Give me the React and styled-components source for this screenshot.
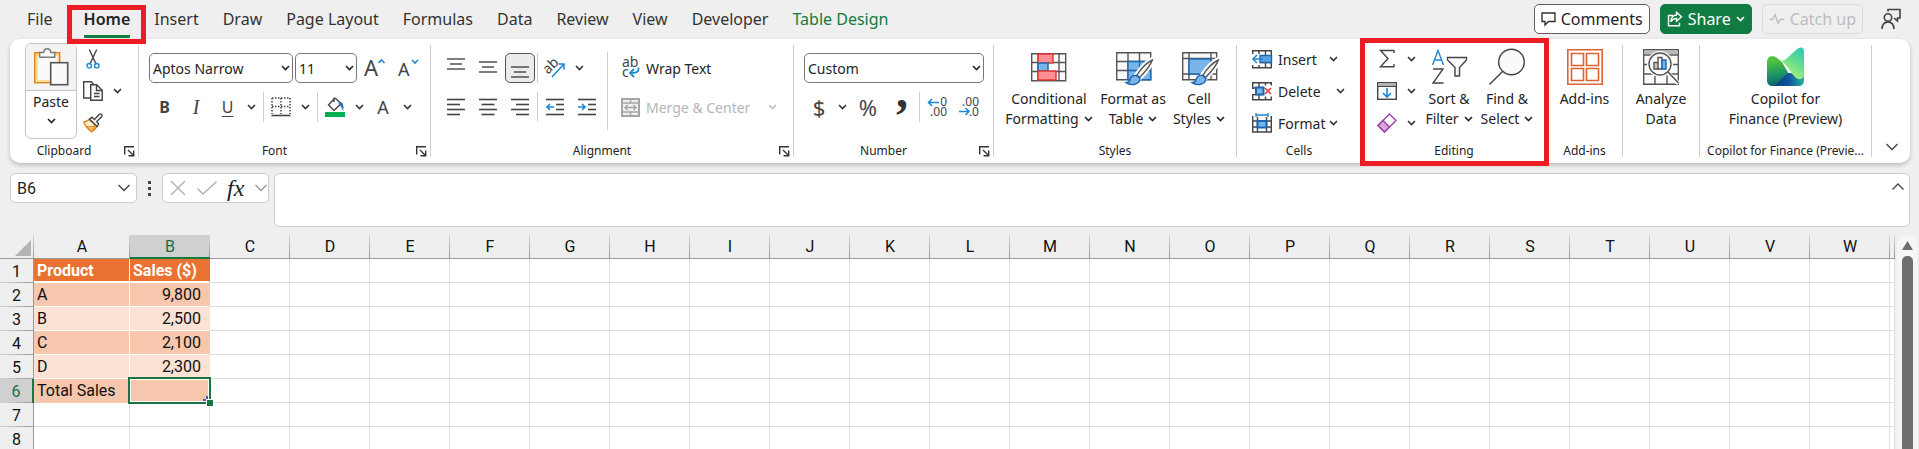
import React from 'react';
import styled, { createGlobalStyle, css } from 'styled-components';

const UI_FONT = '"Noto Sans", "Open Sans", sans-serif';
const CELL_FONT = 'Roboto, "Liberation Sans", sans-serif';
const GREEN = '#107c41';
const BLUE = '#1e88d2';
const INK = '#444444';

const GlobalStyle = createGlobalStyle`
  * {
    box-sizing: border-box;
  }
  body {
    margin: 0;
    background: #efefef;
    color: #242424;
    font-family: ${UI_FONT};
    font-size: 14px;
  }
  button, input, select, textarea {
    margin: 0;
    padding: 0;
    border: 0;
    background: none;
    color: inherit;
    font: inherit;
    outline: none;
  }
  svg {
    display: block;
    flex: none;
    overflow: visible;
  }
`;

const Window = styled.div`
  display: flex;
  flex-direction: column;
  height: 100vh;
  overflow: hidden;
`;

/* ---------- tabs ---------- */

const TabBar = styled.header`
  display: flex;
  align-items: center;
  height: 39px;
  padding: 0 12px 0 15px;
`;

const Tabs = styled.nav`
  display: flex;
  height: 100%;
  flex: 1;
`;

const highlight = css`
  &::after {
    content: '';
    position: absolute;
    border: 5px solid #ed1c24;
    pointer-events: none;
    z-index: 2;
  }
`;

const Tab = styled.button`
  position: relative;
  padding: 0 12px;
  font-size: 16px;
  line-height: 32px;
  white-space: nowrap;
  color: ${({ $accent }) => ($accent ? GREEN : '#333333')};
  &:first-child {
    margin-right: 7px;
  }
  ${({ $active }) => $active && css`
    font-weight: 600;
    color: #242424;
    ${highlight}
    &::after {
      inset: 5px -4px -5px -5px;
    }
  `}
`;

const TabText = styled.span`
  display: block;
  padding-top: 2px;
  border-bottom: 3px solid ${({ $active }) => ($active ? GREEN : 'transparent')};
  border-radius: 1px;
`;

const Actions = styled.div`
  display: flex;
  align-items: center;
  gap: 10px;
  padding-bottom: 1px;
`;

const actionKinds = {
  outline: css`
    background: #ffffff;
    border: 1px solid #616161;
  `,
  primary: css`
    background: ${GREEN};
    border: 1px solid ${GREEN};
    color: #ffffff;
  `,
  disabled: css`
    border: 1px solid #dcdcdc;
    color: #bdbdbd;
  `,
};

const Action = styled.button`
  display: flex;
  align-items: center;
  gap: 5px;
  height: 30px;
  padding: 0 6px;
  border-radius: 5px;
  font-size: 16px;
  white-space: nowrap;
  ${({ $kind }) => actionKinds[$kind]}
`;

const PersonButton = styled.button`
  width: 32px;
  height: 30px;
  display: flex;
  align-items: center;
  justify-content: center;
  margin-left: 2px;
`;

/* ---------- ribbon ---------- */

const RibbonBar = styled.section`
  display: flex;
  margin: 0 9px 0 10px;
  background: #ffffff;
  border-radius: 10px;
  box-shadow: 0 2px 4px rgba(0, 0, 0, 0.22);
`;

const Divider = styled.span`
  flex: none;
  width: 1px;
  margin: 6px 0;
  background: #cfcfcf;
`;

const GroupBox = styled.section`
  display: flex;
  flex-direction: column;
  flex: none;
  width: ${({ $width }) => $width}px;
  padding: 4px 0 2px;
  ${({ $highlighted }) => $highlighted && css`
    position: relative;
    ${highlight}
    &::after {
      inset: -1px -3px -3px -2px;
    }
  `}
`;

const GroupBody = styled.div`
  display: flex;
  height: 98px;
  padding-left: ${({ $inset }) => $inset || 0}px;
  justify-content: ${({ $center }) => ($center ? 'center' : 'flex-start')};
`;

const GroupFooter = styled.div`
  display: flex;
  align-items: center;
  height: 20px;
`;

const Caption = styled.span`
  flex: 1;
  min-width: 0;
  padding: 0 4px;
  overflow: hidden;
  text-overflow: ellipsis;
  white-space: nowrap;
  text-align: center;
  font-size: 12px;
  line-height: 20px;
`;

const Launcher = styled.button`
  display: flex;
  width: 20px;
  height: 20px;
  align-items: center;
  padding-left: 6px;
`;

const Rows = styled.div`
  display: flex;
  flex-direction: column;
  gap: 9px;
  padding-top: 10px;
`;

const Stack = styled.div`
  display: flex;
  flex-direction: column;
`;

const Row = styled.div`
  display: flex;
  align-items: center;
  height: ${({ $tall }) => ($tall ? 32 : 30)}px;
  gap: ${({ $gap }) => $gap || 0}px;
`;

const Rule = styled.span`
  width: 1px;
  height: 30px;
  margin: 0 1px 0 ${({ $space }) => $space || 1}px;
  background: #cfcfcf;
`;

const LongRule = styled(Rule)`
  height: 78px;
  margin: 9px 10px 0 4px;
`;

const IconButton = styled.button`
  display: flex;
  align-items: center;
  justify-content: center;
  flex: none;
  width: ${({ $width }) => $width || 32}px;
  height: 30px;
  border-radius: 5px;
  color: ${INK};
  font-size: 20px;
  ${({ $pressed }) => $pressed && css`
    width: 30px;
    margin: 0 1px;
    background: #ebebeb;
    border: 1px solid #555555;
  `}
`;

const ArrowButton = styled.button`
  display: flex;
  align-items: center;
  justify-content: center;
  flex: none;
  width: 16px;
  height: 30px;
  color: ${({ disabled }) => (disabled ? '#bdbdbd' : '#333333')};
`;

const Letter = styled.span`
  font-size: ${({ $size }) => $size || 16}px;
  line-height: 24px;
  ${({ $face }) => $face === 'bold' && 'font-weight: 700;'}
  ${({ $face }) => $face === 'italic' && 'font-style: italic; font-family: "Liberation Serif", serif;'}
  ${({ $face }) => $face === 'underline' && 'text-decoration: underline; text-underline-offset: 3px;'}
`;

const LabelButton = styled.button`
  display: flex;
  align-items: center;
  gap: 6px;
  height: 30px;
  padding: 0 ${({ $after }) => $after || 0}px 0 3px;
  white-space: nowrap;
  color: ${({ disabled }) => (disabled ? '#b5b5b5' : 'inherit')};
`;

const BigButton = styled.button`
  display: flex;
  flex-direction: column;
  align-items: center;
  flex: none;
  width: ${({ $width }) => ($width ? `${$width}px` : 'auto')};
  padding-top: 4px;
  line-height: 20px;
  white-space: nowrap;
`;

const BigIcon = styled.span`
  display: flex;
  align-items: center;
  height: 40px;
  margin-bottom: 2px;
`;

const BigLine = styled.span`
  display: flex;
  align-items: center;
  gap: 5px;
`;

const PasteBox = styled.div`
  display: flex;
  flex-direction: column;
  width: 52px;
  height: 96px;
  border: 1px solid #c4c4c4;
  border-radius: 6px;
  overflow: hidden;
`;

const PasteTop = styled.button`
  display: flex;
  align-items: center;
  justify-content: center;
  height: 47px;
  background: #f3f3f3;
  border-bottom: 1px solid #c4c4c4;
`;

const PasteBottom = styled.button`
  display: flex;
  flex-direction: column;
  align-items: center;
  gap: 5px;
  line-height: 22px;
`;

const SelectBox = styled.div`
  display: grid;
  align-items: center;
  width: ${({ $width }) => $width}px;
  height: 30px;
  border: 1px solid #767676;
  border-radius: 5px;
  background: #ffffff;
  & > * {
    grid-area: 1 / 1;
  }
  & > svg {
    justify-self: end;
    margin-right: 2px;
    pointer-events: none;
  }
`;

const Select = styled.select`
  appearance: none;
  width: 100%;
  height: 28px;
  padding-left: 3px;
`;

const CollapseButton = styled.button`
  display: flex;
  align-items: flex-end;
  margin-left: auto;
  padding: 0 12px 12px;
`;

/* ---------- formula bar ---------- */

const FormulaRow = styled.section`
  display: flex;
  align-items: flex-start;
  margin: 10px 9px 8px 10px;
`;

const fieldBox = css`
  display: flex;
  align-items: center;
  border: 1px solid #cccccc;
  border-radius: 5px;
  background: #ffffff;
`;

const NameBox = styled.div`
  ${fieldBox}
  width: 127px;
  height: 30px;
  padding-right: 6px;
`;

const NameInput = styled.input`
  flex: 1;
  min-width: 0;
  padding-left: 6px;
  font-family: ${CELL_FONT};
  font-size: 16px;
`;

const Dots = styled.span`
  display: flex;
  flex-direction: column;
  justify-content: center;
  gap: 3px;
  height: 30px;
  margin: 0 11px;
  i {
    width: 3px;
    height: 3px;
    background: #444444;
  }
`;

const FxBox = styled.div`
  ${fieldBox}
  justify-content: space-between;
  width: 107px;
  height: 30px;
  padding: 0 1px 0 7px;
  margin-right: 5px;
`;

const FxLetter = styled.span`
  font: italic 400 24px/26px "Liberation Serif", serif;
  color: #222222;
`;

const FormulaBox = styled.div`
  ${fieldBox}
  flex: 1;
  align-items: flex-start;
  height: 54px;
`;

const FormulaInput = styled.textarea`
  flex: 1;
  height: 50px;
  padding: 4px 8px;
  resize: none;
`;

const ExpandButton = styled.button`
  padding: 9px 5px;
`;

/* ---------- sheet ---------- */

const SheetArea = styled.main`
  display: flex;
  flex: 1;
  min-height: 0;
  font-family: ${CELL_FONT};
  font-size: 16px;
`;

const SheetClip = styled.div`
  flex: 1;
  min-width: 0;
  overflow: hidden;
`;

const Sheet = styled.table`
  width: 100%;
  table-layout: fixed;
  border-collapse: separate;
  border-spacing: 0;
  background: #ffffff;
`;

const Col = styled.col`
  width: ${({ $width }) => $width}px;
`;

const ColumnHead = styled.th`
  height: 24px;
  padding: 0;
  font-weight: 400;
  color: ${({ $active }) => ($active ? '#1e6b47' : '#111111')};
  background:
    linear-gradient(#d8d8d8, #9a9a9a) right / 1px 100% no-repeat,
    ${({ $active }) => ($active ? '#d0d0d0' : '#efefef')};
  border-bottom: ${({ $active }) => ($active ? `2px solid ${GREEN}` : '1px solid #9a9a9a')};
`;

const Corner = styled(ColumnHead)`
  svg {
    margin: 3px 3px 0 auto;
  }
`;

const RowHead = styled.th`
  height: 24px;
  padding: 0;
  font-weight: 400;
  color: ${({ $active }) => ($active ? '#1e6b47' : '#111111')};
  background:
    linear-gradient(to right, #d8d8d8, #9a9a9a) bottom / 100% 1px no-repeat,
    ${({ $active }) => ($active ? '#d0d0d0' : '#efefef')};
  border-right: ${({ $active }) => ($active ? `2px solid ${GREEN}` : '1px solid #9a9a9a')};
`;

const Cell = styled.td`
  height: 24px;
  padding: 0 3px;
  line-height: 20px;
  white-space: nowrap;
  color: #111111;
  border: solid #dedede;
  border-width: 0 1px 1px 0;
`;

const bands = { head: '#e97132', dark: '#f6c6ad', light: '#fbe2d5' };

const TableCell = styled(Cell)`
  background: ${({ $band }) => bands[$band]};
  border-bottom-color: ${({ $last }) => ($last ? 'transparent' : '#ffffff')};
  border-right-color: ${({ $numeric }) => ($numeric ? 'transparent' : '#ffffff')};
  ${({ $numeric, $band }) => $numeric && $band !== 'head' && 'text-align: right; padding-right: 8px;'}
  ${({ $band }) => $band === 'head' && css`
    padding-top: 2px;
    color: #ffffff;
    font-weight: 700;
    border-bottom-width: 2px;
  `}
`;

const SelectedCell = styled(TableCell)`
  position: relative;
`;

const SelectionFrame = styled.span`
  position: absolute;
  inset: -2px;
  border: 2px solid #1a7343;
  box-shadow: inset 0 0 0 1px #ffffff;
  &::before {
    content: '';
    position: absolute;
    right: -4px;
    bottom: -4px;
    width: 6px;
    height: 6px;
    background: #1a7343;
    border: solid #ffffff;
    border-width: 1px 0 0 1px;
  }
  &::after {
    content: '';
    position: absolute;
    right: 1px;
    bottom: 1px;
    width: 5px;
    height: 5px;
    background:
      linear-gradient(#4059a8, #4059a8) right top / 2px 3px no-repeat,
      linear-gradient(#4059a8, #4059a8) left bottom / 3px 2px no-repeat;
  }
`;

const ScrollTrack = styled.div`
  display: flex;
  flex-direction: column;
  align-items: center;
  gap: 6px;
  flex: none;
  width: 20px;
  margin: 0 2px;
  padding-top: 6px;
  background: #f6f6f6;
  border-radius: 10px 10px 0 0;
`;

const ScrollThumb = styled.div`
  flex: 1;
  width: 11px;
  background: #6f6f6f;
  border-radius: 5px 5px 0 0;
`;

/* ---------- icons ---------- */

const Svg = ({ w, h, children, ...rest }) => (
  <svg width={w} height={h} viewBox={`0 0 ${w} ${h}`} fill="none" stroke={INK} strokeWidth="1.4" aria-hidden="true" {...rest}>
    {children}
  </svg>
);

const Chevron = () => (
  <Svg w={9} h={6} stroke="currentColor" strokeWidth="1.6"><path d="M1 1l3.5 3.5L8 1" /></Svg>
);

const WideChevron = ({ up, color = '#444444' }) => (
  <Svg w={12} h={8} stroke={color}><path d={up ? 'M.5 6.5L6 1l5.5 5.5' : 'M.5 1L6 6.5 11.5 1'} /></Svg>
);

const LauncherIcon = () => (
  <Svg w={11} h={11} stroke="#333333"><path d="M.7 8.500V.7h9.300M4 4l5.500 5.500M9.700 4.500v5.200H4.500" /></Svg>
);

const PasteIcon = () => (
  <Svg w={36} h={40}>
    <rect x="3.500" y="7.500" width="22" height="27" fill="#fafafa" stroke="#fbdc9a" strokeWidth="3" />
    <rect x="1.700" y="5.700" width="25" height="30" stroke="#e3801c" />
    <path d="M6.700 10.300V5.500h4c.5-5 6.600-5 7.100 0h4v4.800z" fill="#fafafa" stroke="#7a7a7a" />
    <rect x="17.700" y="15.700" width="17" height="22" fill="#fafafa" stroke="#555555" strokeWidth="1.600" />
  </Svg>
);

const CutIcon = () => (
  <Svg w={14} h={20}>
    <path d="M3.300 .5L9.800 14.500M10.700 .5L4.200 14.500" />
    <circle cx="3.200" cy="16.700" r="2.200" stroke={BLUE} />
    <circle cx="10.800" cy="16.700" r="2.200" stroke={BLUE} />
  </Svg>
);

const CopyIcon = () => (
  <Svg w={20} h={20}>
    <path d="M7 17H.7V.7h7.500l2.500 2.500" />
    <path d="M7.700 3.700h6l5.500 5.500v10H7.700z" fill="#fafafa" />
    <path d="M13.500 4v5.500H19M11 12.500h5.500M11 15.500h5.500" />
  </Svg>
);

const BrushIcon = () => (
  <Svg w={20} h={20}>
    <path d="M6 6.500C4.500 8 2.800 8.800.8 9.200c1.700 4 4.200 7 8 9.600 2-1.500 3.800-3.300 5.200-5.300z" fill="#fdf0d8" stroke="#e3801c" />
    <path d="M3 13c3 1 6 1 9.500-.5l-3.700 6z" fill="#f9c56b" stroke="#e3801c" strokeWidth="1" />
    <path d="M6.500 6L9 4.200l2.500 2.300 4.800-5.200c1.500-1.200 3.700.8 2.400 2.400l-5 4.800 2 2.500-1.700 2.500z" fill="#fafafa" />
  </Svg>
);

const LetterIcon = ({ size, up }) => (
  <Svg w={22} h={22}>
    <text x="0" y="19" fontSize={size} fill={INK} stroke="none">A</text>
    <path d={up ? 'M14.500 6l3-3 3 3' : 'M14 3l3 3 3-3'} stroke={BLUE} strokeWidth="1.600" />
  </Svg>
);

const BordersIcon = () => (
  <Svg w={20} h={20}>
    <path d="M1 1h18M1 1v16M19 1v16M10 1v16M1 9.500h18" strokeDasharray="1.500 1.500" strokeWidth="1.500" />
    <path d="M.5 18.500h19" strokeWidth="1.600" />
  </Svg>
);

const FillIcon = () => (
  <Svg w={20} h={22}>
    <path d="M9.500 2.500L3.500 9l5.500 5.500 7-7L10 2M9 6V1.500" />
    <path d="M14.500 7c2.500-1 3.500 2 3.200 5.500-1.200-2.500-1.700-3.500-3.200-5.500z" fill="#2b6fb3" stroke="#2b6fb3" />
    <rect y="16" width="20" height="5" fill="#00b050" stroke="none" />
  </Svg>
);

const lines = (rows) => rows.map(([x, y, w]) => <path key={y} d={`M${x} ${y}h${w}`} />);

const VAlignIcon = ({ y }) => (
  <Svg w={18} h={24}>{lines([[0, y, 18], [3, y + 5, 12], [0, y + 10, 18]])}</Svg>
);

const HALIGN = { left: 0, center: 1, right: 2 };
const HAlignIcon = ({ align }) => {
  const k = HALIGN[align];
  return (
    <Svg w={18} h={18} strokeWidth="1.600">
      {lines([[0, 1.5, 18], [k * 2.5, 6.5, 13], [0, 11.5, 18], [k * 2.5, 16.5, 13]])}
    </Svg>
  );
};

const IndentIcon = ({ out }) => (
  <Svg w={18} h={18} strokeWidth="1.600">
    {lines([[0, 1.5, 18], [10, 6.5, 8], [10, 11.5, 8], [0, 16.5, 18]])}
    <path d={out ? 'M8 9H1M4 6L1 9l3 3' : 'M0 9h7M4 6l3 3-3 3'} stroke={BLUE} />
  </Svg>
);

const OrientationIcon = () => (
  <Svg w={22} h={22}>
    <text x="-1" y="14" fontSize="14" fill={INK} stroke="none" transform="rotate(-45 6 10)">ab</text>
    <path d="M8 20L20 7M14.500 7H20v5.500" stroke={BLUE} strokeWidth="1.600" />
  </Svg>
);

const WrapIcon = () => (
  <Svg w={19} h={22}>
    <text x="1" y="10" fontSize="14" fill={INK} stroke="none">ab</text>
    <text x="1" y="20" fontSize="14" fill={INK} stroke="none">c</text>
    <path d="M17.500 10.500c.5 4-1 5.500-8 5.500M13 12l-4 4 4 4" stroke={BLUE} strokeWidth="1.800" />
  </Svg>
);

const MergeIcon = () => (
  <Svg w={19} h={19} stroke="#a6a6a6">
    <rect x="1" y="1" width="17" height="17" fill="#f0f0f0" strokeWidth="2" />
    <path d="M1 5h17M1 14h17M9.500 1v4M9.500 14v4M4 9.500h11M6.500 7L4 9.500 6.500 12M12.500 7L15 9.500 12.500 12" />
  </Svg>
);

const CommaIcon = () => (
  <Svg w={12} h={18}>
    <text x="0" y="9" fontSize="48" fontWeight="700" fontFamily="Liberation Serif, serif" fill="#333333" stroke="none">,</text>
  </Svg>
);

const DecimalIcon = ({ more }) => (
  <Svg w={20} h={20}>
    <g fontSize="12" fill={INK} stroke="none" textAnchor="end">
      <text x="20" y="9">{more ? '0' : '.00'}</text>
      <text x="20" y="19">{more ? '.00' : '.0'}</text>
    </g>
    <path d={more ? 'M12 5.500H1.500M5 2L1.500 5.500 5 9' : 'M0 14.500h10M6.500 11l3.500 3.500L6.500 18'} stroke={BLUE} strokeWidth="1.600" />
  </Svg>
);

const ConditionalIcon = () => (
  <Svg w={36} h={30} stroke="#555555">
    <path d="M.7 1.700h34v27H.7zM.7 10.500h34M.7 19.500h34M7 1v27M28 1v27" fill="#fafafa" />
    <rect x="7" y="2" width="15" height="9" fill="#ff8f93" stroke="#e0332f" />
    <rect x="7" y="11" width="10" height="8" fill="#7ab5ea" stroke="#1b66b0" />
    <rect x="7" y="19" width="18" height="9" fill="#ff8f93" stroke="#e0332f" />
  </Svg>
);

const Paintbrush = () => (
  <g>
    <path d="M37 8c-6 3-12 10-16 16l4 3C31 21 36 15 38 9z" fill="#ffffff" stroke="#ffffff" strokeWidth="4" />
    <path d="M37.300 9c-6 3-11.500 9-15.300 15l2.500 2.500C30 21 35.500 15 37.300 9z" fill="#fafafa" stroke="#555555" />
    <path d="M21.500 24.500c-4-.5-6 1.500-6.500 4.500-.5 2-2 2.500-4 2.700 5 3.300 13.500 2.300 14-4.200z" fill="#7ab5ea" stroke="#1b66b0" />
  </g>
);

const FormatTableIcon = () => (
  <Svg w={36} h={32} stroke="#555555">
    <path d="M1.700 1.700h34v27h-34zM1.700 10.500h34M1.700 19.500h34M13 1v27M24.500 1v27" fill="#fafafa" />
    <path d="M13 10.500h22.700v18.200H13z" fill="#7ab5ea" stroke="#1b66b0" />
    <path d="M13 19.500h22M24.500 10.500v18" stroke="#1b66b0" />
    <Paintbrush />
  </Svg>
);

const CellStylesIcon = () => (
  <Svg w={36} h={32} stroke="#555555">
    <path d="M1.700 1.700h34v27h-34zM1.700 7.500h34M1.700 23h34M8 1v27M30 1v27" fill="#fafafa" />
    <rect x="8" y="8" width="22" height="15" fill="#7ab5ea" stroke="#1b66b0" />
    <Paintbrush />
  </Svg>
);

const CELL_GRID = 'M.7.700h18.600v17H.7zM.7 6h18.600M.7 12.500h18.600M7 .7v17M13.500 .7v17';

const InsertIcon = () => (
  <Svg w={20} h={19}>
    <path d={CELL_GRID} fill="#fafafa" />
    <path d="M0 4h8v11H0z" fill="#ffffff" stroke="none" />
    <rect x="8" y="5.500" width="11.500" height="7" fill="#5da3e0" stroke="#1b66b0" />
    <path d="M11 9H1M5 5L1 9l4 4" stroke={BLUE} strokeWidth="1.600" />
  </Svg>
);

const DeleteIcon = () => (
  <Svg w={20} h={19}>
    <path d={CELL_GRID} fill="#fafafa" />
    <path d="M11 3.500h9v11h-9zM0 7h3v5H0z" fill="#ffffff" stroke="none" />
    <rect x="4" y="5.500" width="7.500" height="7" fill="#7ab5ea" stroke="#1b66b0" strokeWidth="2" />
    <path d="M13 6l6 6M19 6l-6 6" stroke="#e53935" strokeWidth="1.600" />
  </Svg>
);

const FormatIcon = () => (
  <Svg w={20} h={20}>
    <path d="M.7 3v16h18.600V3M.7 8h18.600M.7 14h18.600M5.500 4v15M14.500 4v15" />
    <rect x="5.500" y="8" width="9" height="6.500" fill="#7ab5ea" stroke="#1b66b0" strokeWidth="2" />
    <path d="M4 2h12M4 0v4M16 0v4" stroke={BLUE} />
  </Svg>
);

const SumIcon = () => (
  <Svg w={16} h={20}><path d="M15 4V1.500H1.500L9 9.500l-7.500 8.200H15V15" /></Svg>
);

const FillDownIcon = () => (
  <Svg w={20} h={18}>
    <rect x=".7" y=".7" width="18.600" height="16.600" fill="#fafafa" />
    <path d="M.7 4.300h18.600" />
    <path d="M1 1.500h18v2H1z" fill="#b5b5b5" stroke="none" />
    <path d="M10 6v9M6 11l4 4 4-4" stroke={BLUE} strokeWidth="1.600" />
  </Svg>
);

const EraserIcon = () => (
  <Svg w={20} h={20} stroke="#9b3fa5">
    <path d="M12.500 1L19 7.500 7.500 19 1 12.500z" fill="#ffffff" />
    <path d="M6 7.500l6.500 6.500-5 5L1 12.500z" fill="#d9a3de" />
  </Svg>
);

const SortIcon = () => (
  <Svg w={36} h={38}>
    <path d="M1.500 17L7 2.500 12.500 17M3.500 12h7" stroke={BLUE} />
    <path d="M2 21h10L2 35h10.500" />
    <path d="M16.500 9.500h19v2.500l-7 7.500v8.500h-4.500v-8.500l-7.500-7.500z" fill="#fafafa" />
  </Svg>
);

const FindIcon = () => (
  <Svg w={38} h={38}>
    <circle cx="23.500" cy="14" r="12.800" fill="#fafafa" />
    <path d="M14.500 23.500L1.500 36.500" />
  </Svg>
);

const AddInsIcon = () => (
  <Svg w={36} h={36} stroke="#dd6332" strokeWidth="1.600">
    <path d="M.8.800h34.400v34.400H.8z" />
    <path d="M4.500 4.500h12v12h-12zM19.500 4.500h12v12h-12zM4.500 19.500h12v12h-12zM19.500 19.500h12v12h-12z" />
  </Svg>
);

const AnalyzeIcon = () => (
  <Svg w={36} h={36} stroke="#555555">
    <path d="M.7.700h34.600v34.600H.7zM.7 6h34.600M.7 15.500h34.600M.7 25h34.600M12 25v10M24 25v10" fill="#fafafa" />
    <path d="M1 1.500h34V5H1z" fill="#b8b8b8" stroke="none" />
    <circle cx="17" cy="15" r="13" fill="#fafafa" stroke="none" />
    <path d="M24 23l11.500 11.500" stroke="#ffffff" strokeWidth="4" />
    <circle cx="17" cy="15" r="11" fill="#fafafa" />
    <path d="M25 23l10.500 11" strokeWidth="1.600" />
    <path d="M11 13.500h4.500v6.500H11z" fill="#c8c8c8" />
    <path d="M15 8.500h4v11.500h-4z" fill="#fafafa" />
    <path d="M19 11h4v9h-4z" fill="#7ab5ea" stroke="#1b66b0" />
  </Svg>
);

const CopilotIcon = () => (
  <Svg w={38} h={40} stroke="none">
    <defs>
      <linearGradient id="wing" x1="1" y1="0" x2=".4" y2="1">
        <stop offset="0" stopColor="#22c9b4" />
        <stop offset=".55" stopColor="#6fe08b" />
        <stop offset="1" stopColor="#c4f57a" />
      </linearGradient>
      <linearGradient id="base" x1="0" y1="0" x2=".1" y2="1">
        <stop offset=".2" stopColor="#4fc13c" />
        <stop offset=".6" stopColor="#1f9a63" />
        <stop offset="1" stopColor="#0f6470" />
      </linearGradient>
      <linearGradient id="foot" x1="0" y1="0" x2="1" y2="0">
        <stop offset="0" stopColor="#06407f" />
        <stop offset=".5" stopColor="#12549c" />
        <stop offset="1" stopColor="#22b59c" />
      </linearGradient>
    </defs>
    <path d="M0 15C0 9 6 7.500 10 11l5 4 8 14v10H6c-4 0-6-2-6-6z" fill="url(#base)" />
    <path d="M7 39c6-3 10-13 16-13 5 0 8 4 14 2v5c0 4-2 6-6 6z" fill="url(#foot)" />
    <path d="M10 11c3 3 6 4 9 1L29 3c4-4 8-3 8 1v24c0 4-5 6-9 2-6-7-9-14-18-19z" fill="url(#wing)" />
  </Svg>
);

const CommentIcon = () => (
  <Svg w={15} h={14} stroke="#333333"><path d="M1 1h13v8.500H7.500L4 13V9.500H1z" /></Svg>
);

const ShareIcon = () => (
  <Svg w={16} h={16} stroke="#ffffff">
    <path d="M6 4.500H1.500v10.300h11v-3" />
    <path d="M9.500 1.200l5 4.500-5 4.500V7.500C7 7.500 5 8.500 3.800 10.800 4 6.500 6.500 4 9.500 4z" />
  </Svg>
);

const PulseIcon = () => (
  <Svg w={16} h={12} stroke="#bdbdbd"><path d="M.5 6.500h3L6 1.500l3 9 2-4h4.500" /></Svg>
);

const PersonIcon = () => (
  <Svg w={20} h={22} strokeWidth="1.600">
    <circle cx="7" cy="9.500" r="3.700" />
    <path d="M1 21c0-9.500 12-9.500 12 0M7 3.500V1.500h12v8.500h-2.500V13l-3.500-3" />
  </Svg>
);

/* ---------- composition ---------- */

const Group = ({ caption, width, launcher, inset, center, highlighted, children }) => (
  <GroupBox $width={width} $highlighted={highlighted} aria-label={caption || 'Analysis'}>
    <GroupBody $inset={inset} $center={center}>{children}</GroupBody>
    <GroupFooter>
      <Caption>{caption}</Caption>
      {launcher && <Launcher aria-label={`${caption} settings`}><LauncherIcon /></Launcher>}
    </GroupFooter>
  </GroupBox>
);

const Arrow = ({ label, ...rest }) => (
  <ArrowButton aria-label={`${label} options`} {...rest}><Chevron /></ArrowButton>
);

const Tool = ({ label, width, pressed, children }) => (
  <IconButton aria-label={label} $width={width} $pressed={pressed}>{children}</IconButton>
);

const Big = ({ icon, top, bottom, menu, width }) => (
  <BigButton $width={width}>
    <BigIcon>{icon}</BigIcon>
    <BigLine>{top}</BigLine>
    {bottom && <BigLine>{bottom}{menu && <Chevron />}</BigLine>}
  </BigButton>
);

const Picker = ({ label, value, width }) => (
  <SelectBox $width={width}>
    <Select aria-label={label} defaultValue={value}>
      <option>{value}</option>
    </Select>
    <Chevron />
  </SelectBox>
);

const TABS = ['File', 'Home', 'Insert', 'Draw', 'Page Layout', 'Formulas', 'Data', 'Review', 'View', 'Developer', 'Table Design'];

const Header = () => (
  <TabBar>
    <Tabs>
      {TABS.map(tab => (
        <Tab key={tab} $active={tab === 'Home'} $accent={tab === 'Table Design'}>
          <TabText $active={tab === 'Home'}>{tab}</TabText>
        </Tab>
      ))}
    </Tabs>
    <Actions>
      <Action $kind="outline"><CommentIcon />Comments</Action>
      <Action $kind="primary"><ShareIcon />Share<Chevron /></Action>
      <Action $kind="disabled" disabled><PulseIcon />Catch up</Action>
      <PersonButton aria-label="Account"><PersonIcon /></PersonButton>
    </Actions>
  </TabBar>
);

const Ribbon = () => (
  <RibbonBar>
    <Group caption="Clipboard" width={128} inset={15} launcher>
      <PasteBox>
        <PasteTop aria-label="Paste"><PasteIcon /></PasteTop>
        <PasteBottom>Paste<Chevron /></PasteBottom>
      </PasteBox>
      <Stack>
        <Row $tall><Tool label="Cut"><CutIcon /></Tool></Row>
        <Row $tall><Tool label="Copy"><CopyIcon /></Tool><Arrow label="Copy" /></Row>
        <Row $tall><Tool label="Format painter"><BrushIcon /></Tool></Row>
      </Stack>
    </Group>
    <Divider />
    <Group caption="Font" width={291} inset={10} launcher>
      <Rows>
        <Row $gap={2}>
          <Picker label="Font" value="Aptos Narrow" width={144} />
          <Picker label="Font size" value="11" width={62} />
          <Tool label="Increase font size"><LetterIcon size={22} up /></Tool>
          <Tool label="Decrease font size"><LetterIcon size={18} /></Tool>
        </Row>
        <Row>
          <Tool label="Bold" width={31}><Letter $face="bold">B</Letter></Tool>
          <Tool label="Italic"><Letter $face="italic" $size={20}>I</Letter></Tool>
          <Tool label="Underline" width={31}><Letter $face="underline">U</Letter></Tool>
          <Arrow label="Underline" />
          <Rule $space={4} />
          <Tool label="Borders"><BordersIcon /></Tool>
          <Arrow label="Borders" />
          <Rule $space={4} />
          <Tool label="Fill colour"><FillIcon /></Tool>
          <Arrow label="Fill colour" />
          <Tool label="Font colour"><Letter $size={18}>A</Letter></Tool>
          <Arrow label="Font colour" />
        </Row>
      </Rows>
    </Group>
    <Divider />
    <Group caption="Alignment" width={362} inset={9} launcher>
      <Rows>
        <Row>
          <Tool label="Top align"><VAlignIcon y={3} /></Tool>
          <Tool label="Middle align"><VAlignIcon y={6} /></Tool>
          <Tool label="Bottom align" pressed><VAlignIcon y={11} /></Tool>
          <Rule />
          <Tool label="Orientation"><OrientationIcon /></Tool>
          <Arrow label="Orientation" />
        </Row>
        <Row>
          <Tool label="Align left"><HAlignIcon align="left" /></Tool>
          <Tool label="Align centre"><HAlignIcon align="center" /></Tool>
          <Tool label="Align right"><HAlignIcon align="right" /></Tool>
          <Rule />
          <Tool label="Decrease indent"><IndentIcon out /></Tool>
          <Tool label="Increase indent"><IndentIcon /></Tool>
        </Row>
      </Rows>
      <LongRule />
      <Rows>
        <Row><LabelButton><WrapIcon />Wrap Text</LabelButton></Row>
        <Row>
          <LabelButton disabled $after={14}><MergeIcon />Merge &amp; Center</LabelButton>
          <Arrow label="Merge" disabled />
        </Row>
      </Rows>
    </Group>
    <Divider />
    <Group caption="Number" width={199} inset={10} launcher>
      <Rows>
        <Row><Picker label="Number format" value="Custom" width={180} /></Row>
        <Row>
          <Tool label="Currency" width={30}><Letter $size={22}>$</Letter></Tool>
          <Arrow label="Currency" />
          <Tool label="Percent" width={36}><Letter $size={22}>%</Letter></Tool>
          <Tool label="Comma style"><CommaIcon /></Tool>
          <Rule />
          <Tool label="Increase decimal"><DecimalIcon more /></Tool>
          <Tool label="Decrease decimal"><DecimalIcon /></Tool>
        </Row>
      </Rows>
    </Group>
    <Divider />
    <Group caption="Styles" width={242} inset={4}>
      <Big icon={<ConditionalIcon />} top="Conditional" bottom="Formatting" menu width={102} />
      <Big icon={<FormatTableIcon />} top="Format as" bottom="Table" menu width={66} />
      <Big icon={<CellStylesIcon />} top="Cell" bottom="Styles" menu width={66} />
    </Group>
    <Divider />
    <Group caption="Cells" width={124} inset={12}>
      <Stack>
        <Row $tall><LabelButton $after={9}><InsertIcon />Insert</LabelButton><Arrow label="Insert" /></Row>
        <Row $tall><LabelButton $after={12}><DeleteIcon />Delete</LabelButton><Arrow label="Delete" /></Row>
        <Row $tall><LabelButton><FormatIcon />Format</LabelButton><Arrow label="Format" /></Row>
      </Stack>
    </Group>
    <Divider />
    <Group caption="Editing" width={184} inset={9} highlighted>
      <Stack>
        <Row $tall><Tool label="AutoSum"><SumIcon /></Tool><Arrow label="AutoSum" /></Row>
        <Row $tall><Tool label="Fill"><FillDownIcon /></Tool><Arrow label="Fill" /></Row>
        <Row $tall><Tool label="Clear"><EraserIcon /></Tool><Arrow label="Clear" /></Row>
      </Stack>
      <Big icon={<SortIcon />} top="Sort &" bottom="Filter" menu width={60} />
      <Big icon={<FindIcon />} top="Find &" bottom="Select" menu width={56} />
    </Group>
    <Divider />
    <Group caption="Add-ins" width={75} center>
      <Big icon={<AddInsIcon />} top="Add-ins" />
    </Group>
    <Divider />
    <Group width={76} center>
      <Big icon={<AnalyzeIcon />} top="Analyze" bottom="Data" />
    </Group>
    <Divider />
    <Group caption="Copilot for Finance (Previe..." width={171} center>
      <Big icon={<CopilotIcon />} top="Copilot for" bottom="Finance (Preview)" />
    </Group>
    <Divider />
    <CollapseButton aria-label="Collapse ribbon"><WideChevron /></CollapseButton>
  </RibbonBar>
);

const FormulaBar = () => (
  <FormulaRow>
    <NameBox>
      <NameInput aria-label="Name box" defaultValue="B6" />
      <button aria-label="Named ranges"><WideChevron /></button>
    </NameBox>
    <Dots><i /><i /><i /></Dots>
    <FxBox>
      <button aria-label="Cancel" disabled><Svg w={16} h={16} stroke="#b0b0b0"><path d="M1 1l14 14M15 1L1 15" /></Svg></button>
      <button aria-label="Enter" disabled><Svg w={20} h={14} stroke="#b0b0b0"><path d="M.5 7.500L6 13 19.500 .5" /></Svg></button>
      <button aria-label="Insert function"><FxLetter>fx</FxLetter></button>
      <button aria-label="Recent functions"><WideChevron color="#999999" /></button>
    </FxBox>
    <FormulaBox>
      <FormulaInput aria-label="Formula" />
      <ExpandButton aria-label="Collapse formula bar"><WideChevron up /></ExpandButton>
    </FormulaBox>
  </FormulaRow>
);

const COLUMNS = 'ABCDEFGHIJKLMNOPQRSTUVW'.split('');
const ROWS = [
  { band: 'head', cells: ['Product', 'Sales ($)'] },
  { band: 'dark', cells: ['A', '9,800'] },
  { band: 'light', cells: ['B', '2,500'] },
  { band: 'dark', cells: ['C', '2,100'] },
  { band: 'light', cells: ['D', '2,300'] },
  { band: 'dark', cells: ['Total Sales', null], last: true },
  {},
  {},
];

const SheetRow = ({ number, row }) => {
  const { band, cells, last } = row;
  return (
    <tr>
      <RowHead scope="row" $active={last}>{number}</RowHead>
      {COLUMNS.map((name, i) => {
        if (!cells || i > 1) return <Cell key={name} />;
        if (cells[i] === null) {
          return <SelectedCell key={name} $band={band} $numeric $last><SelectionFrame /></SelectedCell>;
        }
        return <TableCell key={name} $band={band} $numeric={i === 1} $last={last}>{cells[i]}</TableCell>;
      })}
      <Cell />
    </tr>
  );
};

const App = () => (
  <Window>
    <GlobalStyle />
    <Header />
    <Ribbon />
    <FormulaBar />
    <SheetArea>
      <SheetClip>
        <Sheet>
          <colgroup>
            <Col $width={34} />
            {COLUMNS.map(name => <Col key={name} $width={name === 'A' ? 96 : 80} />)}
            <col />
          </colgroup>
          <thead>
            <tr>
              <Corner aria-label="Select all">
                <Svg w={16} h={16} stroke="none"><path d="M16 0v16H0z" fill="#b4b4b4" /></Svg>
              </Corner>
              {COLUMNS.map(name => <ColumnHead key={name} scope="col" $active={name === 'B'}>{name}</ColumnHead>)}
              <ColumnHead aria-label="X" />
            </tr>
          </thead>
          <tbody>
            {ROWS.map((row, i) => <SheetRow key={i} number={i + 1} row={row} />)}
          </tbody>
        </Sheet>
      </SheetClip>
      <ScrollTrack>
        <Svg w={11} h={9} stroke="none"><path d="M5.500 0L11 9H0z" fill="#6f6f6f" /></Svg>
        <ScrollThumb />
      </ScrollTrack>
    </SheetArea>
  </Window>
);

export default App;
